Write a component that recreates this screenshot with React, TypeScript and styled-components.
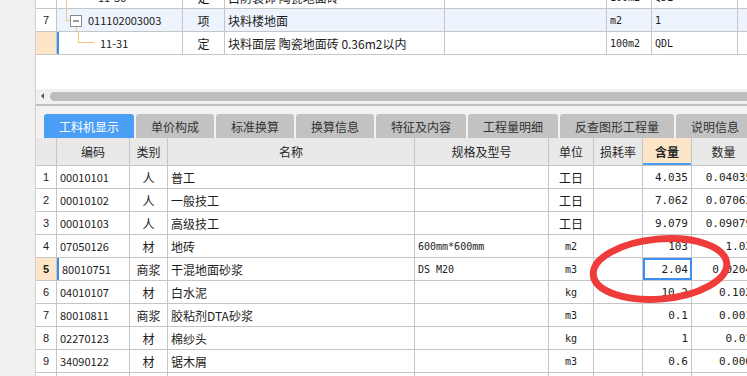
import React from "react";
import styled, { createGlobalStyle } from "styled-components";

const GlobalStyle = createGlobalStyle`
  *, *::before, *::after { box-sizing: border-box; }
  html, body { margin: 0; padding: 0; background: #f0f0f0; }
  body {
    font-family: "Noto Sans CJK SC", "Noto Sans", sans-serif;
    font-size: 12px;
    color: #1c1c1c;
  }
`;

const LINE = "#c6c6c6";
const BLUE = "#3d8ef2";
const PEACH = "#fde6c8";
const TREE = "#f8c37f";

const Page = styled.div`
  position: relative;
  display: flex;
  width: 747px;
  height: 376px;
  overflow: hidden;
  background: #f0f0f0;
`;

const Gutter = styled.div`
  flex: none;
  width: 36px;
  background: #f0f0f0;
  border-right: 1px solid #d2d2d2;
`;

const Main = styled.div`
  flex: 1;
  min-width: 0;
  display: flex;
  flex-direction: column;
  overflow: hidden;
`;

const TopPane = styled.div`
  flex: none;
  height: 89px;
  background: #fff;
  overflow: hidden;
`;

const TopRows = styled.div`
  margin-top: -14px;
`;

const TopRow = styled.div<{ $active?: boolean }>`
  display: grid;
  grid-template-columns: 21px 126px 42px 220px 162px 45px 86px 60px;
  height: 23px;
  background: ${(p) => (p.$active ? "#edf4fd" : "#fff")};
  border-bottom: 1px solid ${LINE};
`;

const BottomRow = styled.div`
  flex: none;
  display: grid;
  grid-template-columns: 21px 73px 38px 247px 134px 45px 49px 49px 64px;
  height: 23px;
  background: #fff;
  border-bottom: 1px solid ${LINE};
`;

const HeaderRow = styled(BottomRow)`
  height: 28px;
  background: #e9e9e9;
`;

const Cell = styled.div<{
  $align?: "left" | "center" | "right";
  $mono?: boolean;
  $mark?: boolean;
}>`
  display: flex;
  align-items: center;
  justify-content: ${(p) =>
    p.$align === "center" ? "center" : p.$align === "right" ? "flex-end" : "flex-start"};
  padding: 0 3px;
  border-right: 1px solid ${LINE};
  border-left: ${(p) => (p.$mark ? `2px solid ${BLUE}` : "none")};
  white-space: nowrap;
  overflow: hidden;
  font-family: ${(p) =>
    p.$mono ? `"DejaVu Sans Mono", "Liberation Mono", monospace` : "inherit"};
  font-size: ${(p) => (p.$mono ? "10px" : "12px")};
`;

const NumCell = styled(Cell)<{ $current?: boolean }>`
  justify-content: center;
  padding: 0;
  font-family: "Liberation Sans", sans-serif;
  font-size: 11px;
  font-weight: ${(p) => (p.$current ? 700 : 400)};
  background: ${(p) => (p.$current ? PEACH : "#fff")};
`;

const CodeCell = styled(Cell)`
  font-size: 11px;
`;

const TreeCell = styled(Cell)`
  padding-left: 0;
  font-size: 11px;
`;

const ValueCell = styled(Cell)<{ $selected?: boolean }>`
  font-size: 11px;
  outline: ${(p) => (p.$selected ? `2px solid ${BLUE}` : "none")};
  outline-offset: -2px;
`;

const HeadCell = styled(Cell)<{ $sorted?: boolean }>`
  justify-content: center;
  color: #262626;
  font-weight: ${(p) => (p.$sorted ? 700 : 400)};
  background: ${(p) => (p.$sorted ? PEACH : "transparent")};
  box-shadow: ${(p) => (p.$sorted ? `inset 0 -2px 0 #4a9ff5` : "none")};
`;

const HScroll = styled.div`
  flex: none;
  height: 12px;
  display: flex;
  align-items: flex-end;
  padding-left: 5px;
  background: #f0f0f0;
`;

const ScrollArrow = styled.div`
  width: 0;
  height: 0;
  margin: 0 6px 2px 0;
  border-top: 3px solid transparent;
  border-bottom: 3px solid transparent;
  border-right: 3px solid #555;
`;

const ScrollThumb = styled.div`
  flex: 1;
  height: 9px;
  background: #bdbdbd;
  border-radius: 5px 0 0 5px;
`;

const Splitter = styled.div`
  flex: none;
  height: 2px;
  margin-top: 3px;
  background: #bfbfbf;
`;

const TabBar = styled.div`
  flex: none;
  display: flex;
  gap: 2px;
  height: 32px;
  padding: 8px 0 0 8px;
  background: #f2f2f2;
`;

const Tab = styled.div<{ $active?: boolean }>`
  flex: none;
  display: flex;
  align-items: center;
  height: 24px;
  padding: 0 15px;
  border-radius: 3px 3px 0 0;
  background: ${(p) => (p.$active ? "#4a9ff5" : "#c2c2c2")};
  color: ${(p) => (p.$active ? "#fff" : "#333")};
  white-space: nowrap;
`;

const Ring = styled.svg`
  position: absolute;
  left: 582px;
  top: 228px;
  pointer-events: none;
`;

type TreeKind = "pass" | "parent" | "child";

function TreeGlyph({ kind }: { kind: TreeKind }) {
  const w = kind === "parent" ? 31 : 41;
  return (
    <svg width={w} height={22} style={{ flex: "none" }}>
      {kind === "pass" && <line x1={9.5} y1={0} x2={9.5} y2={22} stroke={TREE} />}
      {kind === "parent" && (
        <>
          <line x1={9.5} y1={0} x2={9.5} y2={11.5} stroke={TREE} />
          <line x1={9.5} y1={11.5} x2={13} y2={11.5} stroke={TREE} />
          <line x1={19.5} y1={17} x2={19.5} y2={22} stroke={TREE} />
          <rect x={13.5} y={6.5} width={11} height={11} fill="#fff" stroke="#8a8a8a" />
          <line x1={16} y1={12} x2={22} y2={12} stroke="#333" />
        </>
      )}
      {kind === "child" && (
        <>
          <line x1={19.5} y1={0} x2={19.5} y2={10.5} stroke={TREE} />
          <line x1={19.5} y1={10.5} x2={35} y2={10.5} stroke={TREE} />
        </>
      )}
    </svg>
  );
}

const topRows = [
  { num: "", tree: "pass" as TreeKind, code: "11-30", type: "定", name: "白防装饰 陶瓷地面砖", unit: "100m2", expr: "QDL" },
  { num: "7", tree: "parent" as TreeKind, code: "011102003003", type: "项", name: "块料楼地面", unit: "m2", expr: "1", active: true },
  { num: "", tree: "child" as TreeKind, code: "11-31", type: "定", name: "块料面层 陶瓷地面砖 0.36m2以内", unit: "100m2", expr: "QDL", current: true },
];

const tabs = ["工料机显示", "单价构成", "标准换算", "换算信息", "特征及内容", "工程量明细", "反查图形工程量", "说明信息"];

const headers = ["", "编码", "类别", "名称", "规格及型号", "单位", "损耗率", "含量", "数量"];

const items = [
  ["00010101", "人", "普工", "", "工日", "4.035", "0.04035"],
  ["00010102", "人", "一般技工", "", "工日", "7.062", "0.07062"],
  ["00010103", "人", "高级技工", "", "工日", "9.079", "0.09079"],
  ["07050126", "材", "地砖", "600mm*600mm", "m2", "103", "1.03"],
  ["80010751", "商浆", "干混地面砂浆", "DS M20", "m3", "2.04", "0.0204"],
  ["04010107", "材", "白水泥", "", "kg", "10.2", "0.102"],
  ["80010811", "商浆", "胶粘剂DTA砂浆", "", "m3", "0.1", "0.001"],
  ["02270123", "材", "棉纱头", "", "kg", "1", "0.01"],
  ["34090122", "材", "锯木屑", "", "m3", "0.6", "0.006"],
  ["34110103", "材", "水", "", "m3", "2.6", "0.026"],
];

const isAscii = (s: string) => /^[\x00-\x7f]*$/.test(s);

export default function App() {
  return (
    <Page>
      <GlobalStyle />
      <Gutter />
      <Main>
        <TopPane>
          <TopRows>
            {topRows.map((r, i) => (
              <TopRow key={i} $active={r.active}>
                <NumCell $current={r.current}>{r.num}</NumCell>
                <TreeCell $mark={r.current}>
                  <TreeGlyph kind={r.tree} />
                  {r.code}
                </TreeCell>
                <Cell $align="center">{r.type}</Cell>
                <Cell>{r.name}</Cell>
                <Cell />
                <Cell $mono>{r.unit}</Cell>
                <Cell $mono>{r.expr}</Cell>
                <Cell />
              </TopRow>
            ))}
          </TopRows>
        </TopPane>
        <HScroll>
          <ScrollArrow />
          <ScrollThumb />
        </HScroll>
        <Splitter />
        <TabBar>
          {tabs.map((t, i) => (
            <Tab key={t} $active={i === 0}>
              {t}
            </Tab>
          ))}
        </TabBar>
        <HeaderRow>
          {headers.map((h, i) => (
            <HeadCell key={i} $sorted={h === "含量"}>
              {h}
            </HeadCell>
          ))}
        </HeaderRow>
        {items.map((r, i) => {
          const current = i === 4;
          return (
            <BottomRow key={r[0]}>
              <NumCell $current={current}>{i + 1}</NumCell>
              <CodeCell $mark={current}>{r[0]}</CodeCell>
              <Cell $align="center">{r[1]}</Cell>
              <Cell>{r[2]}</Cell>
              <Cell $mono>{r[3]}</Cell>
              <Cell $align="center" $mono={isAscii(r[4])}>
                {r[4]}
              </Cell>
              <Cell />
              <ValueCell $align="right" $mono $selected={current}>
                {r[5]}
              </ValueCell>
              <ValueCell $align="right" $mono>
                {r[6]}
              </ValueCell>
            </BottomRow>
          );
        })}
      </Main>
      <Ring width={156} height={82} viewBox="0 0 156 82">
        <ellipse
          cx={78}
          cy={41}
          rx={67}
          ry={30}
          fill="none"
          stroke="#f03b3b"
          strokeWidth={7}
          transform="rotate(-5 78 41)"
        />
      </Ring>
    </Page>
  );
}
